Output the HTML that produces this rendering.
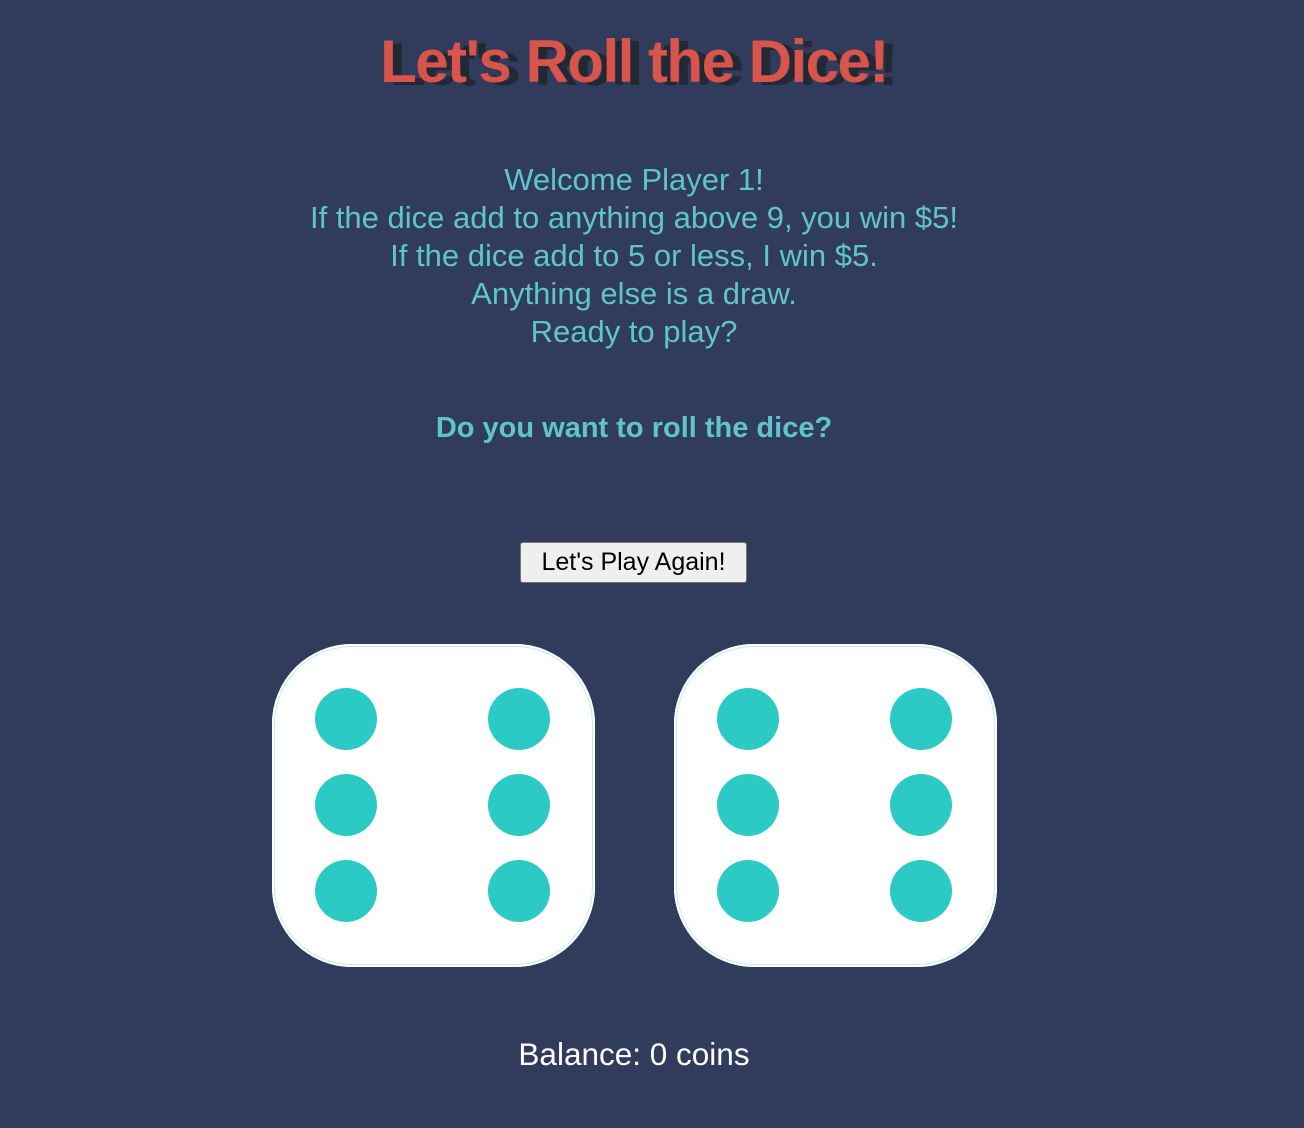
<!DOCTYPE html>
<html><head><style>
body{margin:0;width:1304px;height:1128px;background:#313c5c;font-family:"Liberation Sans",sans-serif;overflow:hidden;position:relative}
.t{position:absolute;left:0;width:1268px;text-align:center}
h1{margin:0;position:absolute;top:25px;left:0;width:1268px;text-align:center;font-size:60px;font-weight:bold;color:#d9544a;letter-spacing:-1.5px;text-shadow:9px 3px 0 #222834;line-height:74px}
.p{top:161px;font-size:31px;line-height:38px;color:#5fc4cc;font-weight:300}
.q{top:412px;font-size:29px;color:#5fc4cc;font-weight:bold}
button{position:absolute;left:520px;top:542px;width:227px;height:41px;font-family:"Liberation Sans",sans-serif;font-size:25px;background:#efefef;border:1px solid #767676;border-radius:3px;padding:0;color:#000}
.d{position:absolute;top:644px;width:323px;height:323px;background:#fff;border-radius:80px;box-shadow:inset 0 0 0 2px #fff,inset 0 0 0 3px #bdeeee}
.dot{position:absolute;width:62px;height:62px;border-radius:50%;background:#2ccac4}
.b{top:1036px;font-size:31.5px;color:#fff}
</style></head><body>
<h1>Let's Roll the Dice!</h1>
<div class="t p">Welcome Player 1!<br>If the dice add to anything above 9, you win $5!<br>If the dice add to 5 or less, I win $5.<br>Anything else is a draw.<br>Ready to play?</div>
<div class="t q">Do you want to roll the dice?</div>
<button>Let's Play Again!</button>
<div class="d" style="left:272px">
<div class="dot" style="left:43px;top:44px"></div><div class="dot" style="left:216px;top:44px"></div>
<div class="dot" style="left:43px;top:130px"></div><div class="dot" style="left:216px;top:130px"></div>
<div class="dot" style="left:43px;top:216px"></div><div class="dot" style="left:216px;top:216px"></div>
</div>
<div class="d" style="left:674px">
<div class="dot" style="left:43px;top:44px"></div><div class="dot" style="left:216px;top:44px"></div>
<div class="dot" style="left:43px;top:130px"></div><div class="dot" style="left:216px;top:130px"></div>
<div class="dot" style="left:43px;top:216px"></div><div class="dot" style="left:216px;top:216px"></div>
</div>
<div class="t b">Balance: 0 coins</div>
</body></html>
